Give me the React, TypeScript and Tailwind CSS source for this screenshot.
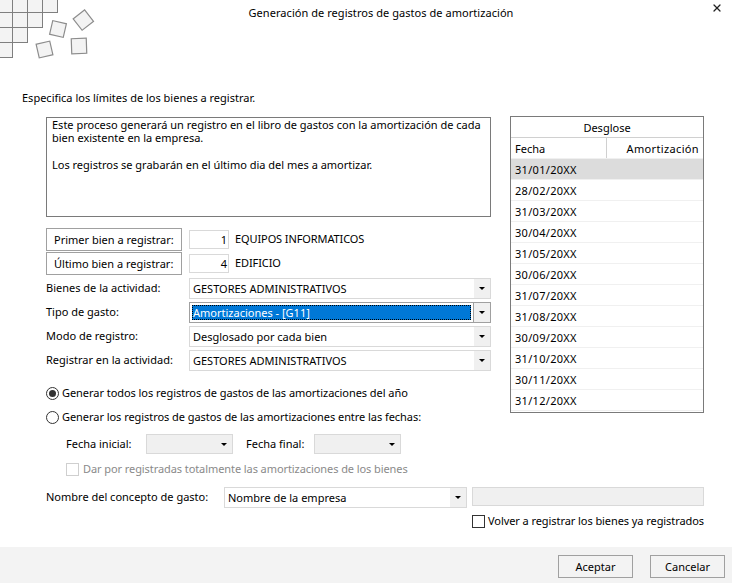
import { X } from "lucide-react";

const fechas = [
  "31/01/20XX",
  "28/02/20XX",
  "31/03/20XX",
  "30/04/20XX",
  "31/05/20XX",
  "30/06/20XX",
  "31/07/20XX",
  "31/08/20XX",
  "30/09/20XX",
  "31/10/20XX",
  "30/11/20XX",
  "31/12/20XX",
];

function Logo() {
  const cells = [
    [-3, -3], [12, -3], [27, -3], [42, -3],
    [-3, 12], [12, 12], [27, 12],
    [-3, 27], [12, 27],
    [-3, 42],
  ];
  return (
    <svg width="100" height="62" viewBox="0 0 100 62" className="block">
      {cells.map(([x, y], i) => (
        <rect key={i} x={x + 0.5} y={y + 0.5} width="15" height="15" fill="#f3f3f3" stroke="#7f7f7f" strokeWidth="1" />
      ))}
      <rect x="51" y="22" width="14" height="14" fill="#f3f3f3" stroke="#8c8c8c" strokeWidth="1.2" transform="rotate(13 58 29)" />
      <rect x="76" y="13" width="14.5" height="14.5" fill="#f3f3f3" stroke="#8c8c8c" strokeWidth="1.2" transform="rotate(-38 83 20)" />
      <rect x="37.5" y="42.5" width="14" height="14" fill="#f3f3f3" stroke="#8c8c8c" strokeWidth="1.2" transform="rotate(-13 44.5 49.5)" />
      <rect x="71.5" y="38.5" width="15" height="15" fill="#f3f3f3" stroke="#8c8c8c" strokeWidth="1.2" transform="rotate(-2 79 46)" />
    </svg>
  );
}

function Arrow({ className }: { className: string }) {
  return (
    <div className={className}>
      <div className="w-0 h-0 border-x-[3px] border-x-transparent border-t-[3px] border-t-black" />
    </div>
  );
}

function Select({ value, focused }: { value: string; focused?: boolean }) {
  if (focused) {
    return (
      <div className="w-[302px] h-[21px] flex border border-[#a0a0a0] bg-white">
        <div className="flex-1 m-[2px] bg-[#0078d7] text-white pl-[1px] leading-[15px] outline-1 outline-dotted outline-black -outline-offset-1">
          {value}
        </div>
        <Arrow className="w-[17px] flex items-center justify-center bg-[#f0f0f0] border-l border-[#a0a0a0]" />
      </div>
    );
  }
  return (
    <div className="w-[302px] h-[21px] flex border border-[#d9d9d9] bg-white">
      <div className="flex-1 pl-[3px] leading-[19px]">{value}</div>
      <Arrow className="w-[16px] flex items-center justify-center bg-[#f0f0f0]" />
    </div>
  );
}

function Row({ label, value, focused }: { label: string; value: string; focused?: boolean }) {
  return (
    <div className="flex items-center">
      <div className="w-[143px]">{label}</div>
      <Select value={value} focused={focused} />
    </div>
  );
}

function BienRow({ label, num, name }: { label: string; num: string; name: string }) {
  return (
    <div className="flex items-center">
      <div className="w-[136px] h-[23px] border border-[#a0a0a0] pl-[7px] leading-[21px] whitespace-nowrap">{label}</div>
      <div className="ml-[7px] w-[40px] h-[19px] border border-[#d9d9d9] text-right pr-[1px] leading-[17px]">{num}</div>
      <div className="ml-[6px] tracking-[-0.1px]">{name}</div>
    </div>
  );
}

function Radio({ checked, label }: { checked?: boolean; label: string }) {
  return (
    <div className="flex items-center h-[14px]">
      <div className="w-[13px] h-[13px] rounded-full border border-[#333] flex items-center justify-center">
        {checked && <div className="w-[7px] h-[7px] rounded-full bg-[#333]" />}
      </div>
      <div className="ml-[3px] tracking-[-0.05px]">{label}</div>
    </div>
  );
}

function SmallSelect() {
  return (
    <div className="w-[87px] h-[20px] flex border border-[#d9d9d9] bg-[#f0f0f0]">
      <div className="flex-1" />
      <Arrow className="w-[16px] flex items-center justify-center" />
    </div>
  );
}

export default function App() {
  return (
    <div className="w-[732px] h-[583px] flex flex-col bg-white text-[11px] text-black font-['Noto_Sans',sans-serif] overflow-hidden">
      <div className="relative h-[91px] shrink-0">
        <Logo />
        <div className="absolute top-[5px] left-0 w-full text-center pl-[30px] tracking-[0.05px]">
          Generación de registros de gastos de amortización
        </div>
        <X className="absolute top-[2px] left-[711px] text-[#222]" size={12} strokeWidth={2.5} />
      </div>

      <div className="flex-1 pl-[22px]">
        <div className="h-[14px] leading-[14px]">Especifica los límites de los bienes a registrar.</div>
        <div className="flex mt-[11px]">
          <div className="ml-[24px] w-[445px] pt-[1px]">
            <div className="h-[100px] border border-[#7a7a7a] px-[5px] leading-[13px]">
              <p>Este proceso generará un registro en el libro de gastos con la amortización de cada bien existente en la empresa.</p>
              <p className="mt-[14px]">Los registros se grabarán en el último dia del mes a amortizar.</p>
            </div>
            <div className="mt-[11px] flex flex-col gap-[1px]">
              <BienRow label="Primer bien a registrar:" num="1" name="EQUIPOS INFORMATICOS" />
              <BienRow label="Último bien a registrar:" num="4" name="EDIFICIO" />
            </div>
            <div className="mt-[3px] flex flex-col gap-[3px]">
              <Row label="Bienes de la actividad:" value="GESTORES ADMINISTRATIVOS" />
              <Row label="Tipo de gasto:" value="Amortizaciones - [G11]" focused />
              <Row label="Modo de registro:" value="Desglosado por cada bien" />
              <Row label="Registrar en la actividad:" value="GESTORES ADMINISTRATIVOS" />
            </div>
          </div>
          <div className="ml-[19px] w-[194px] h-[297px] border border-[#7a7a7a] flex flex-col">
            <div className="h-[21px] shrink-0 text-center leading-[21px] border-b border-[#d0d0d0]">Desglose</div>
            <div className="h-[21px] shrink-0 flex leading-[21px] border-b border-[#f0f0f0]">
              <div className="w-[96px] pl-[4px] border-r border-[#d0d0d0]">Fecha</div>
              <div className="flex-1 text-right pr-[4px] tracking-[0.35px]">Amortización</div>
            </div>
            {fechas.map((fecha, i) => (
              <div
                key={fecha}
                className={`h-[21px] shrink-0 pl-[4px] leading-[21px] tracking-[0.3px] border-b border-[#f0f0f0] ${i === 0 ? "bg-[#dcdcdc]" : ""}`}
              >
                {fecha}
              </div>
            ))}
          </div>
        </div>

        <div className="ml-[24px] mt-[-27px] flex flex-col gap-[10px]">
          <Radio checked label="Generar todos los registros de gastos de las amortizaciones del año" />
          <Radio label="Generar los registros de gastos de las amortizaciones entre las fechas:" />
        </div>
        <div className="ml-[44px] mt-[10px] flex items-center">
          <div className="w-[80px]">Fecha inicial:</div>
          <SmallSelect />
          <div className="ml-[13px] w-[68px]">Fecha final:</div>
          <SmallSelect />
        </div>
        <div className="ml-[44px] mt-[8px] flex items-center text-[#8a8a8a] h-[14px]">
          <div className="w-[13px] h-[13px] border border-[#cfcfcf]" />
          <div className="ml-[4px] tracking-[-0.08px]">Dar por registradas totalmente las amortizaciones de los bienes</div>
        </div>
        <div className="ml-[24px] mt-[11px] flex items-start">
          <div className="w-[178px] leading-[19px]">Nombre del concepto de gasto:</div>
          <div className="w-[243px] h-[21px] flex border border-[#d9d9d9]">
            <div className="flex-1 pl-[3px] leading-[19px]">Nombre de la empresa</div>
            <Arrow className="w-[16px] flex items-center justify-center bg-[#f0f0f0]" />
          </div>
          <div className="ml-[5px] w-[232px] h-[19px] border border-[#d9d9d9] bg-[#f0f0f0]" />
        </div>
        <div className="ml-[450px] mt-[6px] flex items-center h-[14px]">
          <div className="w-[13px] h-[13px] border border-[#333]" />
          <div className="ml-[3px] tracking-[-0.07px]">Volver a registrar los bienes ya registrados</div>
        </div>
      </div>

      <div className="h-[36px] shrink-0 bg-[#f3f3f3] flex justify-end items-start pt-[8px] pr-[7px] gap-[17px]">
        <div className="w-[75px] h-[23px] border border-[#a0a0a0] text-center leading-[21px]">Aceptar</div>
        <div className="w-[75px] h-[23px] border border-[#a0a0a0] text-center leading-[21px]">Cancelar</div>
      </div>
    </div>
  );
}
